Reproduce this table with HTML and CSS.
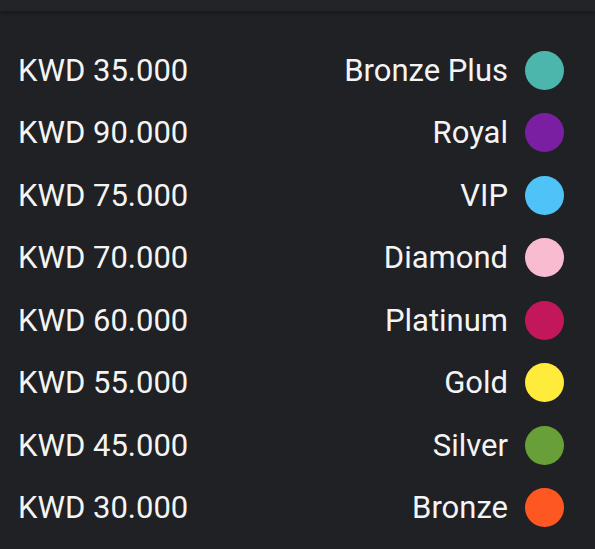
FILE: index.html
```html
<!DOCTYPE html>
<html>
<head>
<meta charset="utf-8">
<link rel="stylesheet" href="styles.css">
</head>
<body>
<div class="topbar"></div>
<ul class="tiers">
  <li class="tier"><span class="price">KWD 35.000</span><span class="name">Bronze Plus</span><span class="dot teal"></span></li>
  <li class="tier"><span class="price">KWD 90.000</span><span class="name">Royal</span><span class="dot purple"></span></li>
  <li class="tier"><span class="price">KWD 75.000</span><span class="name">VIP</span><span class="dot blue"></span></li>
  <li class="tier"><span class="price">KWD 70.000</span><span class="name">Diamond</span><span class="dot pink"></span></li>
  <li class="tier"><span class="price">KWD 60.000</span><span class="name">Platinum</span><span class="dot crimson"></span></li>
  <li class="tier"><span class="price">KWD 55.000</span><span class="name">Gold</span><span class="dot yellow"></span></li>
  <li class="tier"><span class="price">KWD 45.000</span><span class="name">Silver</span><span class="dot green"></span></li>
  <li class="tier"><span class="price">KWD 30.000</span><span class="name">Bronze</span><span class="dot orange"></span></li>
</ul>
</body>
</html>
```
FILE: styles.css
```css
html, body {
  margin: 0;
  padding: 0;
  background: #1f2125;
  font-family: Roboto, "Liberation Sans", sans-serif;
  color: #f4f4f4;
  height: 549px;
  overflow: hidden;
}
.topbar {
  height: 11px;
  background: #222428;
  box-shadow: 0 2px 4px rgba(0,0,0,0.35);
}
.tiers {
  list-style: none;
  margin: 0;
  padding: 28px 31px 0 18px;
}
.tier {
  display: flex;
  align-items: center;
  height: 62.5px;
  font-size: 31px;
}
.price {
  flex: 1;
}
.name {
  margin-right: 17px;
}
.dot {
  width: 39px;
  height: 39px;
  border-radius: 50%;
  flex: none;
}
.teal { background: #4db6ac; }
.purple { background: #7b1fa2; }
.blue { background: #4fc3f7; }
.pink { background: #f8bbd0; }
.crimson { background: #c2185b; }
.yellow { background: #ffeb3b; }
.green { background: #689f38; }
.orange { background: #ff5722; }
```
